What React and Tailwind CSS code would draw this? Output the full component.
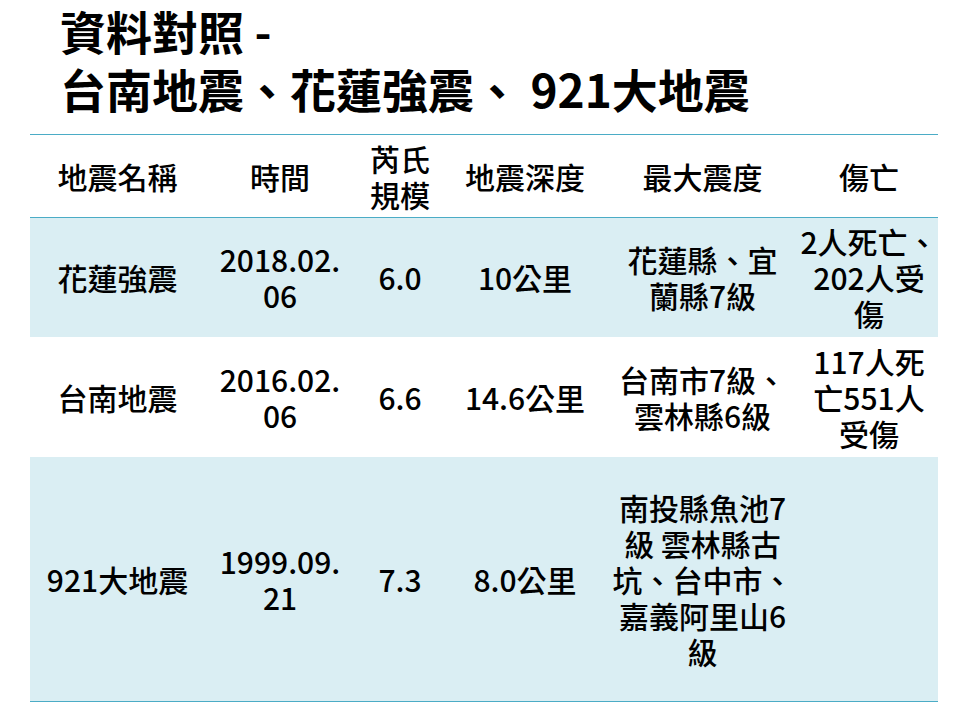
import React from "react";

const cols = [
  { w: "w-[175px]" },
  { w: "w-[150px]" },
  { w: "w-[90px]" },
  { w: "w-[160px]" },
  { w: "w-[195px]" },
  { w: "w-[138px]" },
];

const header = [
  ["地震名稱"],
  ["時間"],
  ["芮氏", "規模"],
  ["地震深度"],
  ["最大震度"],
  ["傷亡"],
];

const rows = [
  {
    h: "h-[119px]",
    bg: "bg-[#daeef3]",
    cells: [
      ["花蓮強震"],
      ["2018.02.", "06"],
      ["6.0"],
      ["10公里"],
      ["花蓮縣、宜", "蘭縣7級"],
      ["2人死亡、", "202人受", "傷"],
    ],
  },
  {
    h: "h-[120px]",
    bg: "bg-white",
    cells: [
      ["台南地震"],
      ["2016.02.", "06"],
      ["6.6"],
      ["14.6公里"],
      ["台南市7級、", "雲林縣6級"],
      ["117人死", "亡551人", "受傷"],
    ],
  },
  {
    h: "h-[245px]",
    bg: "bg-[#daeef3]",
    cells: [
      ["921大地震"],
      ["1999.09.", "21"],
      ["7.3"],
      ["8.0公里"],
      ["南投縣魚池7", "級 雲林縣古", "坑、台中市、", "嘉義阿里山6", "級"],
      [],
    ],
  },
];

const Lines = ({ lines }) =>
  lines.map((l, i) => (
    <span key={i} className="block whitespace-nowrap">
      {l}
    </span>
  ));

export default function App() {
  return (
    <div
      className="w-[960px] h-[720px] bg-white overflow-hidden text-black"
      style={{ fontFamily: '"Noto Sans CJK TC", "Noto Sans", sans-serif' }}
    >
      {/* Title */}
      <div className="pl-[60px] pt-[1px] text-[46px] leading-[58px] font-bold">
        <div>資料對照 -</div>
        <div>台南地震、花蓮強震、 921大地震</div>
      </div>

      {/* Table */}
      <div className="pl-[30px] pt-[17px]">
        <table className="w-[908px] table-fixed border-collapse text-[30px] leading-[36px] font-medium text-center">
          <colgroup>
            {cols.map((c, i) => (
              <col key={i} className={c.w} />
            ))}
          </colgroup>
          <thead>
            <tr className="h-[83px] border-t border-b border-[#4bacc6]">
              {header.map((h, i) => (
                <th key={i} className="font-medium p-0 align-middle">
                  <Lines lines={h} />
                </th>
              ))}
            </tr>
          </thead>
          <tbody>
            {rows.map((r, ri) => (
              <tr
                key={ri}
                className={`${r.h} ${r.bg} ${
                  ri === rows.length - 1 ? "border-b border-[#4bacc6]" : ""
                }`}
              >
                {r.cells.map((c, ci) => (
                  <td key={ci} className="p-0 align-middle">
                    <Lines lines={c} />
                  </td>
                ))}
              </tr>
            ))}
          </tbody>
        </table>
      </div>
    </div>
  );
}
